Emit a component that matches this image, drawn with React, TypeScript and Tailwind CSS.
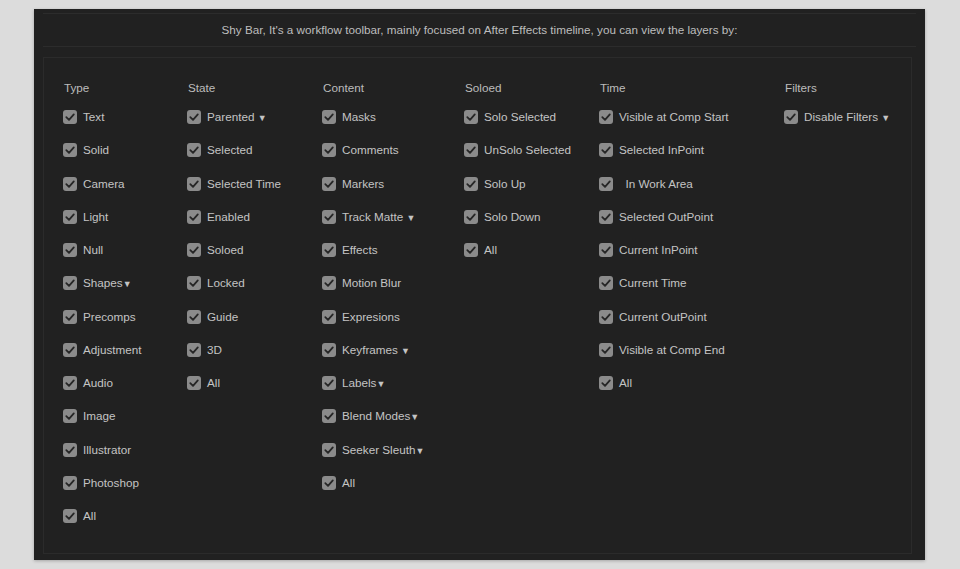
import React from "react";

type Col = { title: string; x: string; items: string[] };

const COLUMNS: Col[] = [
  {
    title: "Type",
    x: "w-[124px]",
    items: [
      "Text",
      "Solid",
      "Camera",
      "Light",
      "Null",
      "Shapes▼",
      "Precomps",
      "Adjustment",
      "Audio",
      "Image",
      "Illustrator",
      "Photoshop",
      "All",
    ],
  },
  {
    title: "State",
    x: "w-[135px]",
    items: ["Parented ▼", "Selected", "Selected Time", "Enabled", "Soloed", "Locked", "Guide", "3D", "All"],
  },
  {
    title: "Content",
    x: "w-[142px]",
    items: [
      "Masks",
      "Comments",
      "Markers",
      "Track Matte ▼",
      "Effects",
      "Motion Blur",
      "Expresions",
      "Keyframes ▼",
      "Labels▼",
      "Blend Modes▼",
      "Seeker Sleuth▼",
      "All",
    ],
  },
  {
    title: "Soloed",
    x: "w-[135px]",
    items: ["Solo Selected", "UnSolo Selected", "Solo Up", "Solo Down", "All"],
  },
  {
    title: "Time",
    x: "w-[185px]",
    items: [
      "Visible at Comp Start",
      "Selected InPoint",
      "\u00a0 In Work Area",
      "Selected OutPoint",
      "Current InPoint",
      "Current Time",
      "Current OutPoint",
      "Visible at Comp End",
      "All",
    ],
  },
  {
    title: "Filters",
    x: "w-[110px]",
    items: ["Disable Filters ▼"],
  },
];

const Check = () => (
  <span className="flex h-[14px] w-[14px] shrink-0 items-center justify-center rounded-[3px] bg-[#8b8b8b]">
    <svg viewBox="0 0 14 14" className="h-[14px] w-[14px]">
      <path d="M3.3 7.2 L6 9.8 L10.8 4.4" fill="none" stroke="#262626" strokeWidth="1.8" strokeLinecap="round" strokeLinejoin="round" />
    </svg>
  </span>
);

const Label = ({ text }: { text: string }) => {
  const i = text.indexOf("▼");
  if (i < 0) return <span>{text}</span>;
  return (
    <span>
      {text.slice(0, i)}
      <span className="text-[9px]">▼</span>
    </span>
  );
};

export default function App() {
  return (
    <div className="h-[569px] w-full bg-[#dcdcdc] pl-[34px] pt-[9px] font-['Liberation_Sans',Arial,sans-serif]">
      <div className="flex h-[551px] w-[891px] flex-col bg-[#212121] px-[9px] pt-[4px] shadow-[0_1px_3px_rgba(0,0,0,0.25)]">
        <div className="flex h-[34px] items-center justify-center border-y border-[#2c2c2c] text-[11.7px] text-[#bdbdbd]">
          Shy Bar, It's a workflow toolbar, mainly focused on After Effects timeline, you can view the layers by:
        </div>
        <div className="mt-[10px] mr-[4px] flex h-[497px] border border-[#2b2b2b] pl-[19px] pt-[23px]">
          {COLUMNS.map((c) => (
            <div key={c.title} className={`${c.x} flex flex-col`}>
              <div className="h-[14px] pl-[1px] text-[11.7px] leading-[14px] text-[#bcbcbc]">{c.title}</div>
              <div className="mt-[15px] flex flex-col">
                {c.items.map((it) => (
                  <div key={it} className="flex h-[33.25px] items-start gap-[6px] text-[11.7px] leading-[14px] text-[#c4c4c4]">
                    <Check />
                    <Label text={it} />
                  </div>
                ))}
              </div>
            </div>
          ))}
        </div>
      </div>
    </div>
  );
}
